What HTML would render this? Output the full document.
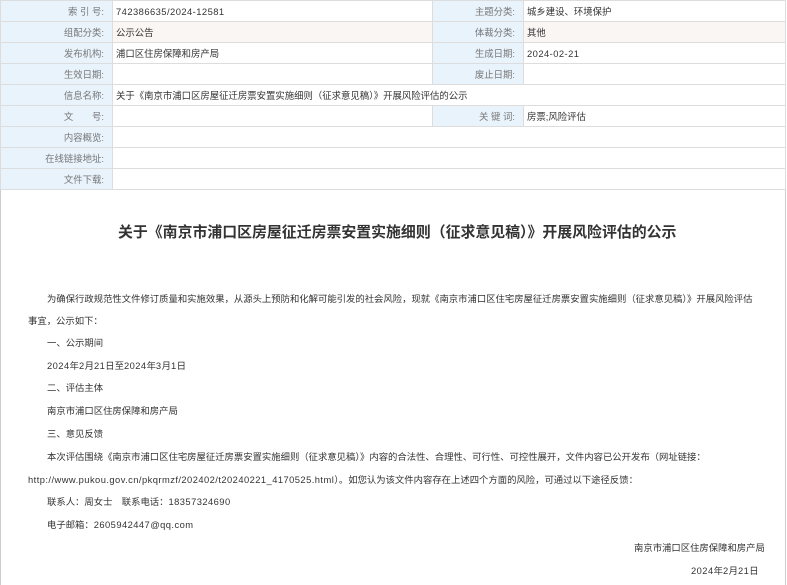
<!DOCTYPE html>
<html><head><meta charset="utf-8"><style>
*{margin:0;padding:0;box-sizing:border-box}
body{width:787px;height:585px;overflow:hidden;background:#fff;font-family:"Liberation Sans","Noto Sans CJK SC",sans-serif;color:#333;position:relative}
.frame{position:absolute;left:0;top:0;width:786px;height:585px;border-left:1px solid #ccc;border-right:1px solid #ccc}
table{position:absolute;left:0;top:0;border-collapse:collapse;width:786px;font-size:9.4px}
td{height:21px;border:1px solid #ddd;padding:0 3px;white-space:nowrap;vertical-align:middle}
td.l{background:#e9f3fc;color:#777;text-align:right;padding-right:8px}
tr.p td.v{background:#faf6f4}
.t{position:absolute;white-space:nowrap;font-size:9.35px;color:#333}
.n{letter-spacing:0.45px}
h1{position:absolute;left:118px;top:221px;font-size:14.9px;font-weight:bold;color:#333;white-space:nowrap}
</style></head><body>
<div class="frame"></div>
<table>
<colgroup><col style="width:112px"><col style="width:320px"><col style="width:91px"><col></colgroup>
<tr><td class="l">索 引 号:</td><td class="v"><span class="n">742386635/2024-12581</span></td><td class="l">主题分类:</td><td class="v">城乡建设、环境保护</td></tr>
<tr class="p"><td class="l">组配分类:</td><td class="v">公示公告</td><td class="l">体裁分类:</td><td class="v">其他</td></tr>
<tr><td class="l">发布机构:</td><td class="v">浦口区住房保障和房产局</td><td class="l">生成日期:</td><td class="v"><span class="n">2024-02-21</span></td></tr>
<tr><td class="l">生效日期:</td><td class="v"></td><td class="l">废止日期:</td><td class="v"></td></tr>
<tr><td class="l">信息名称:</td><td colspan="3">关于《南京市浦口区房屋征迁房票安置实施细则（征求意见稿）》开展风险评估的公示</td></tr>
<tr><td class="l">文　　号:</td><td class="v"></td><td class="l">关 键 词:</td><td class="v">房票;风险评估</td></tr>
<tr><td class="l">内容概览:</td><td colspan="3"></td></tr>
<tr><td class="l">在线链接地址:</td><td colspan="3"></td></tr>
<tr><td class="l">文件下载:</td><td colspan="3"></td></tr>
</table>
<h1>关于《南京市浦口区房屋征迁房票安置实施细则（征求意见稿）》开展风险评估的公示</h1>
<div class="t" style="left:47px;top:291px">为确保行政规范性文件修订质量和实施效果，从源头上预防和化解可能引发的社会风险，现就《南京市浦口区住宅房屋征迁房票安置实施细则（征求意见稿）》开展风险评估</div>
<div class="t" style="left:28px;top:313px">事宜，公示如下：</div>
<div class="t" style="left:47px;top:335px">一、公示期间</div>
<div class="t" style="left:47px;top:358px"><span class="n">2024</span>年<span class="n">2</span>月<span class="n">21</span>日至<span class="n">2024</span>年<span class="n">3</span>月<span class="n">1</span>日</div>
<div class="t" style="left:47px;top:380px">二、评估主体</div>
<div class="t" style="left:47px;top:403px">南京市浦口区住房保障和房产局</div>
<div class="t" style="left:47px;top:426px">三、意见反馈</div>
<div class="t" style="left:47px;top:449px">本次评估围绕《南京市浦口区住宅房屋征迁房票安置实施细则（征求意见稿）》内容的合法性、合理性、可行性、可控性展开，文件内容已公开发布（网址链接：</div>
<div class="t" style="left:28px;top:472px"><span class="n">http://www.pukou.gov.cn/pkqrmzf/202402/t20240221_4170525.html</span>）。如您认为该文件内容存在上述四个方面的风险，可通过以下途径反馈：</div>
<div class="t" style="left:47px;top:494px">联系人：周女士　联系电话：<span class="n">18357324690</span></div>
<div class="t" style="left:47px;top:517px">电子邮箱：<span class="n">2605942447@qq.com</span></div>
<div class="t" style="left:634px;top:540px">南京市浦口区住房保障和房产局</div>
<div class="t" style="left:691px;top:563px"><span class="n">2024</span>年<span class="n">2</span>月<span class="n">21</span>日</div>
</body></html>
